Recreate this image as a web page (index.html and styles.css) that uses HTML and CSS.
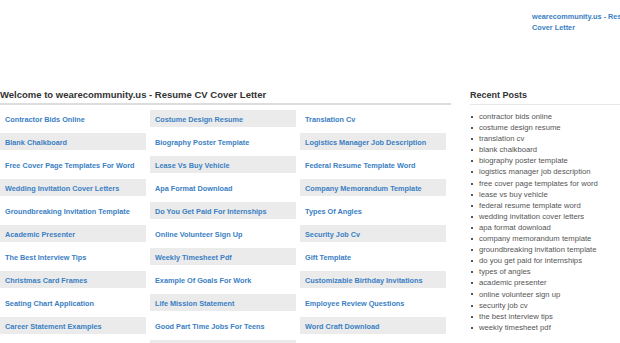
FILE: index.html
```html
<!DOCTYPE html>
<html lang="en">
<head>
    <meta charset="UTF-8">
    <meta name="viewport" content="width=device-width, initial-scale=1.0">
    <title>wearecommunity.us - Resume CV Cover Letter</title>
    <link rel="stylesheet" href="styles.css">
</head>
<body>
    <div class="top">
        <a href="#" class="site-link">wearecommunity.us - Resume CV Cover Letter</a>
    </div>

    <div class="wrap">
        <div class="main">
            <h1>Welcome to wearecommunity.us - Resume CV Cover Letter</h1>
            <div class="grid">
                <a href="#" class="cell">Contractor Bids Online</a>
                <a href="#" class="cell">Costume Design Resume</a>
                <a href="#" class="cell">Translation Cv</a>
                <a href="#" class="cell">Blank Chalkboard</a>
                <a href="#" class="cell">Biography Poster Template</a>
                <a href="#" class="cell">Logistics Manager Job Description</a>
                <a href="#" class="cell">Free Cover Page Templates For Word</a>
                <a href="#" class="cell">Lease Vs Buy Vehicle</a>
                <a href="#" class="cell">Federal Resume Template Word</a>
                <a href="#" class="cell">Wedding Invitation Cover Letters</a>
                <a href="#" class="cell">Apa Format Download</a>
                <a href="#" class="cell">Company Memorandum Template</a>
                <a href="#" class="cell">Groundbreaking Invitation Template</a>
                <a href="#" class="cell">Do You Get Paid For Internships</a>
                <a href="#" class="cell">Types Of Angles</a>
                <a href="#" class="cell">Academic Presenter</a>
                <a href="#" class="cell">Online Volunteer Sign Up</a>
                <a href="#" class="cell">Security Job Cv</a>
                <a href="#" class="cell">The Best Interview Tips</a>
                <a href="#" class="cell">Weekly Timesheet Pdf</a>
                <a href="#" class="cell">Gift Template</a>
                <a href="#" class="cell">Christmas Card Frames</a>
                <a href="#" class="cell">Example Of Goals For Work</a>
                <a href="#" class="cell">Customizable Birthday Invitations</a>
                <a href="#" class="cell">Seating Chart Application</a>
                <a href="#" class="cell">Life Mission Statement</a>
                <a href="#" class="cell">Employee Review Questions</a>
                <a href="#" class="cell">Career Statement Examples</a>
                <a href="#" class="cell">Good Part Time Jobs For Teens</a>
                <a href="#" class="cell">Word Craft Download</a>
                <div class="cell"></div>
                <div class="cell"></div>
                <div class="cell"></div>
            </div>
        </div>

        <div class="side">
            <h2>Recent Posts</h2>
            <ul class="posts">
                <li>contractor bids online</li>
                <li>costume design resume</li>
                <li>translation cv</li>
                <li>blank chalkboard</li>
                <li>biography poster template</li>
                <li>logistics manager job description</li>
                <li>free cover page templates for word</li>
                <li>lease vs buy vehicle</li>
                <li>federal resume template word</li>
                <li>wedding invitation cover letters</li>
                <li>apa format download</li>
                <li>company memorandum template</li>
                <li>groundbreaking invitation template</li>
                <li>do you get paid for internships</li>
                <li>types of angles</li>
                <li>academic presenter</li>
                <li>online volunteer sign up</li>
                <li>security job cv</li>
                <li>the best interview tips</li>
                <li>weekly timesheet pdf</li>
            </ul>
        </div>
    </div>
</body>
</html>
```
FILE: styles.css
```css
body {
    margin: 0;
    width: 620px;
    overflow: hidden;
    font-family: "Liberation Sans", Arial, sans-serif;
    background: #fff;
}

a {
    text-decoration: none;
    color: #3a80c3;
}

.top {
    height: 89px;
    padding-left: 532px;
    box-sizing: border-box;
    white-space: nowrap;
}

.site-link {
    display: block;
    width: 125px;
    white-space: normal;
    padding-top: 11px;
    font-size: 7.3px;
    line-height: 11px;
    font-weight: bold;
}

.wrap {
    display: flex;
}

.main {
    width: 451px;
    flex: none;
}

h1 {
    margin: 0;
    font-size: 9.5px;
    line-height: 12px;
    font-weight: bold;
    color: #333;
    padding-bottom: 2px;
    border-bottom: 2px solid #ddd;
}

.grid {
    display: grid;
    grid-template-columns: repeat(3, 146px);
    column-gap: 4px;
    row-gap: 6px;
    margin-top: 5px;
}

.cell {
    display: block;
    height: 16px;
    padding-top: 1px;
    line-height: 17px;
    padding-left: 5px;
    font-size: 7.3px;
    font-weight: bold;
    white-space: nowrap;
    overflow: hidden;
}

.cell:nth-child(even) {
    background: #ebebeb;
}

.side {
    margin-left: 19px;
    flex: 1;
    min-width: 0;
}

h2 {
    margin: 0;
    font-size: 9px;
    line-height: 12px;
    font-weight: bold;
    color: #333;
    padding-bottom: 3px;
    border-bottom: 1px solid #e6e6e6;
}

.posts {
    list-style: none;
    margin: 6px 0 0;
    padding: 0;
}

.posts li {
    font-size: 7.7px;
    line-height: 11.1px;
    color: #555;
    white-space: nowrap;
}

.posts li::before {
    content: "";
    display: inline-block;
    width: 2px;
    height: 2px;
    background: #555;
    margin: 0 6px 0 1px;
    vertical-align: middle;
}
```
